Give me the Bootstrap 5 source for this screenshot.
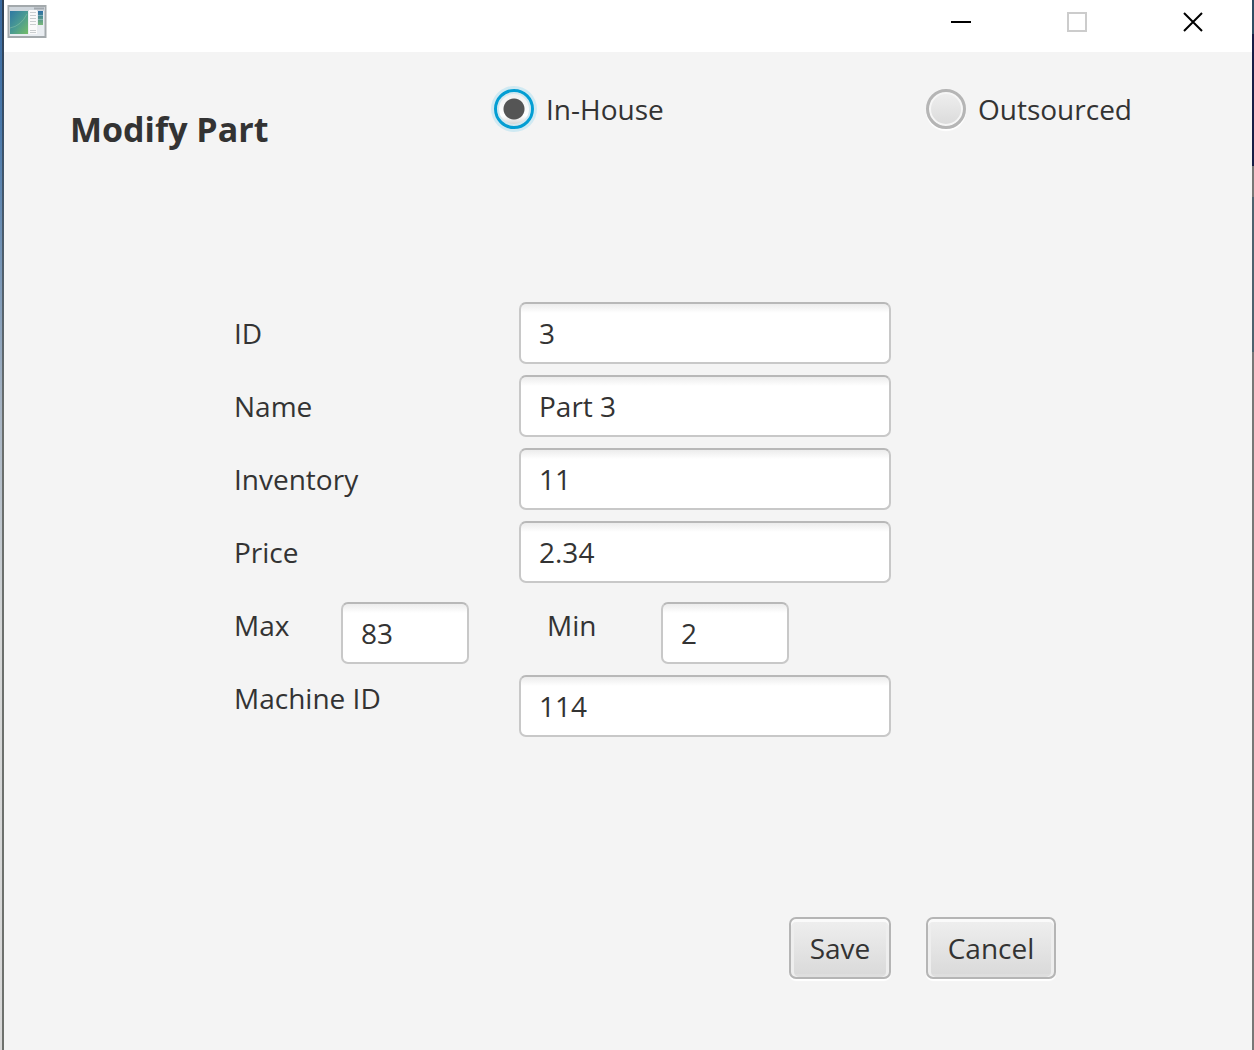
<!DOCTYPE html>
<html lang="en">
<head>
<meta charset="utf-8">
<meta name="viewport" content="width=device-width, initial-scale=1">
<title>Modify Part</title>
<link href="https://cdn.jsdelivr.net/npm/bootstrap@5.3.0/dist/css/bootstrap.min.css" rel="stylesheet">
<style>
  body { font-family: "Open Sans", "Noto Sans", sans-serif; font-size: 28px; line-height: 40px; color: #333; background: #f4f4f4; }
  .app-window { position: relative; padding: 0 2px 0 4px; }
  /* strips of desktop visible at the window's sides */
  .app-window::before, .app-window::after { content: ""; position: absolute; top: 0; bottom: 0; width: 2px; }
  .app-window::before { left: 0; width: 4px;
    border-image: linear-gradient(#2e4054, #37506a 12%, #6a6e6c 40%, #6e716d) 1;
    border-style: solid; border-width: 0 2px 0 0;
    background: linear-gradient(#3a6aa0, #4a79ab 12%, #a4b2c2 38%, #d4d6d6 60%, #d8d8d8); }
  .app-window::after { right: 0; background: linear-gradient(#2f4d63 0 34px, #161d45 34px 166px, #777 166px 197px, #4d626e 197px 352px, #777 352px); }
  .title-bar { height: 52px; background: #fff; padding: 0 1px 0 3px; }
  .caption-btn { width: 116px; height: 44px; border: 0; padding: 0; background: transparent; display: flex; align-items: center; justify-content: center; }
  .head-grid { display: grid; grid-template-columns: 424fr 432fr 326fr; padding: 37px 0 0 66px; }
  .head-title { font-size: 34px; line-height: 40px; font-weight: 700; margin: 20px 0 0; }
  .fx-check { display: flex; align-items: center; gap: 12px; height: 40px; }
  .fx-radio { appearance: none; flex: none; width: 40px; height: 40px; margin: 0; border: 3px solid #b5b5b5; border-radius: 50%;
    background: linear-gradient(#efefef, #dadada); box-shadow: inset 0 0 0 2px #f6f6f6, 0 2px 1px #fff; }
  .fx-radio:checked { border-color: #039ed3; box-shadow: 0 0 0 3px #cfe9f2, inset 0 0 0 2px #d3e8ef;
    background: radial-gradient(circle, #555 0 10px, transparent 11px), linear-gradient(#efefef, #fff 70%, #ccc); }
  .part-form { padding: 153px 0 0 230px; }
  .fx-rows { display: grid; row-gap: 11px; }
  .fx-row { display: flex; height: 62px; align-items: flex-start; }
  .fx-row label { line-height: 62px; }
  .col-name { width: 285px; }
  .col-max { width: 107px; }
  .col-min { width: 114px; }
  .fx-input { height: 62px; border: 2px solid #c8c8c8; border-top-color: #b8b8b8; border-radius: 7px; padding: 0 18px; font-size: 28px; color: #333;
    background: linear-gradient(#ececec, #fff 9px); }
  .fx-input:focus { background: linear-gradient(#ececec, #fff 9px); color: #333; }
  .w-long { width: 372px; }
  .w-short { width: 128px; }
  .drop-down-8 { margin-top: 8px; }
  .gap-min { margin-left: 78px; }
  .actions { gap: 35px; padding: 188px 196px 71px 0; }
  .fx-btn { height: 62px; font-size: 28px; line-height: 40px; padding: 0; color: #333; border: 2px solid #b5b5b5; border-radius: 7px;
    background: linear-gradient(#efefef, #d9d9d9); box-shadow: inset 0 3px 0 #fafafa, inset 3px 0 0 #eee, inset -3px 0 0 #eee, inset 0 -3px 0 #dedede, 0 2px 1px #fff; }
  .btn-save { width: 102px; }
  .btn-cancel { width: 130px; }
</style>
</head>
<body>
<div class="app-window min-vh-100">
  <header class="title-bar d-flex align-items-start">
    <svg class="mt-1" width="41" height="35" viewBox="0 0 41 35" aria-hidden="true">
      <defs>
        <linearGradient id="pane" x1="0" y1="0" x2="1" y2="1"><stop offset="0" stop-color="#2e78a3"/><stop offset=".5" stop-color="#4a9a92"/><stop offset="1" stop-color="#74bd67"/></linearGradient>
        <linearGradient id="side" x1="0" y1="0" x2="0" y2="1"><stop offset="0" stop-color="#2b6ea5"/><stop offset="1" stop-color="#78b878"/></linearGradient>
      </defs>
      <rect x="1.500" y="2" width="37" height="31" fill="#e9edf1" stroke="#a3a9ac" stroke-width="2"/>
      <rect x="2.500" y="3" width="35" height="4" fill="#cfd6dc"/>
      <path d="M27 4.500h10" stroke="#a2a9af" stroke-width="2"/>
      <rect x="3" y="7" width="18" height="23" fill="url(#pane)"/>
      <path d="M3 24Q14 22 20 10" stroke="#a2d3b0" stroke-opacity=".4" fill="none"/>
      <rect x="22" y="6" width="8" height="24" fill="#fafafa"/>
      <path d="M23 8.500h6M23 11.500h6M23 14.500h6M23 17.500h6M23 20.500h6M23 26.500h6M23 28.500h6" stroke="#c9cdcf"/>
      <rect x="31" y="7" width="5" height="14" fill="url(#side)"/>
      <path d="M31 11.500h5M31 15.500h5" stroke="#a9cbd6" stroke-opacity=".6"/>
    </svg>
    <div class="d-flex ms-auto">
      <button type="button" class="caption-btn" aria-label="Minimize"><svg width="20" height="20"><path d="M0 10h20" stroke="#000" stroke-width="2"/></svg></button>
      <button type="button" class="caption-btn" aria-label="Maximize" disabled><svg width="20" height="20"><rect x="1" y="1" width="18" height="18" fill="none" stroke="#ccc" stroke-width="2"/></svg></button>
      <button type="button" class="caption-btn" aria-label="Close"><svg width="20" height="20"><path d="M1 1l18 18M19 1L1 19" stroke="#000" stroke-width="2"/></svg></button>
    </div>
  </header>
  <form>
    <div class="head-grid">
      <h1 class="head-title">Modify Part</h1>
      <div class="fx-check"><input class="fx-radio" type="radio" name="source" id="inhouse" checked><label for="inhouse">In-House</label></div>
      <div class="fx-check"><input class="fx-radio" type="radio" name="source" id="outsourced"><label for="outsourced">Outsourced</label></div>
    </div>
    <div class="part-form">
      <div class="fx-rows">
        <div class="fx-row"><label class="col-name" for="pid">ID</label><input class="form-control fx-input w-long" id="pid" value="3"></div>
        <div class="fx-row"><label class="col-name" for="pname">Name</label><input class="form-control fx-input w-long" id="pname" value="Part 3"></div>
        <div class="fx-row"><label class="col-name" for="pinv">Inventory</label><input class="form-control fx-input w-long" id="pinv" value="11"></div>
        <div class="fx-row"><label class="col-name" for="pprice">Price</label><input class="form-control fx-input w-long" id="pprice" value="2.34"></div>
        <div class="fx-row"><label class="col-max" for="pmax">Max</label><input class="form-control fx-input w-short drop-down-8" id="pmax" value="83"><label class="col-min gap-min" for="pmin">Min</label><input class="form-control fx-input w-short drop-down-8" id="pmin" value="2"></div>
        <div class="fx-row"><label class="col-name" for="pmach">Machine ID</label><input class="form-control fx-input w-long drop-down-8" id="pmach" value="114"></div>
      </div>
    </div>
    <div class="actions d-flex justify-content-end">
      <button type="button" class="btn fx-btn btn-save">Save</button>
      <button type="button" class="btn fx-btn btn-cancel">Cancel</button>
    </div>
  </form>
</div>
<script src="https://cdn.jsdelivr.net/npm/bootstrap@5.3.0/dist/js/bootstrap.bundle.min.js"></script>
</body>
</html>
